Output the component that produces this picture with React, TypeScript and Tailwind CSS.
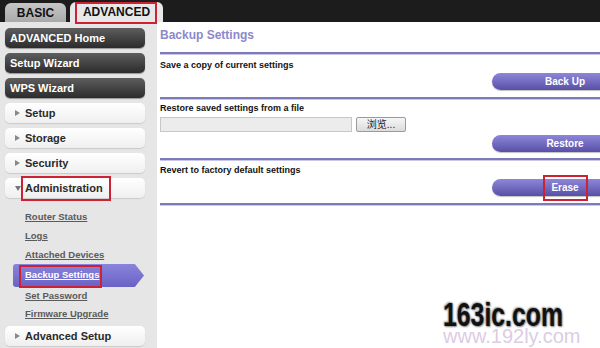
import React from "react";

// NETGEAR-style admin page: Advanced > Administration > Backup Settings

const darkItems = ["ADVANCED Home", "Setup Wizard", "WPS Wizard"];
const subLinks = ["Router Status", "Logs", "Attached Devices"];

function DarkItem({ label }: { label: string }) {
  return (
    <div className="h-[20px] rounded-[5px] bg-linear-to-b from-[#5e5e5e] to-[#2c2c2c] pl-[5px] text-[11px] font-bold leading-[20px] text-white shadow-[0_1px_1px_rgba(0,0,0,0.35)]">
      {label}
    </div>
  );
}

function Arrow({ open = false }: { open?: boolean }) {
  return open ? (
    <svg width="6" height="5" viewBox="0 0 6 5" className="mr-[4px]">
      <path d="M0 0h6L3 5z" fill="#777" />
    </svg>
  ) : (
    <svg width="5" height="6" viewBox="0 0 5 6" className="mr-[5px]">
      <path d="M0 0l5 3-5 3z" fill="#888" />
    </svg>
  );
}

function MenuItem({ label, open, marked }: { label: string; open?: boolean; marked?: boolean }) {
  return (
    <div className="flex h-[20px] items-center rounded-[5px] bg-linear-to-b from-white to-[#efefef] pl-[10px] text-[11px] font-bold text-[#2a2a2a] shadow-[0_1px_1px_rgba(0,0,0,0.12)]">
      <Arrow open={open} />
      <span className="relative">
        {label}
        {marked && (
          <span className="absolute left-[-4px] right-[-8px] top-[-4px] bottom-[-5px] border-2 border-[#cc2233]" />
        )}
      </span>
    </div>
  );
}

function SubLink({ label, h = "h-[19px] leading-[19px]" }: { label: string; h?: string }) {
  return (
    <div className={`${h} pl-[20px] text-[9.5px] font-bold text-[#5a5a5a] underline`}>
      {label}
    </div>
  );
}

function Rule() {
  return <div className="h-[2px] bg-[#7d7ab9] shadow-[0_1px_0_#c9c7e4]" />;
}

function PurpleButton({ label, marked }: { label: string; marked?: boolean }) {
  return (
    <div className="mr-[-38px] flex h-[17px] w-[146px] items-center justify-center self-end rounded-l-[9px] bg-linear-to-b from-[#8e87d9] to-[#5850a6] text-[10px] font-bold text-white shadow-[0_1px_1px_rgba(0,0,0,0.25)]">
      <span className="relative">
        {label}
        {marked && (
          <span className="absolute left-[-8px] right-[-9px] top-[-5px] bottom-[-6px] border-2 border-[#cc2233]" />
        )}
      </span>
    </div>
  );
}

export default function App() {
  return (
    <div className="relative h-[348px] w-[600px] overflow-hidden bg-white font-['Liberation_Sans','Noto_Sans_CJK_SC',Arial,sans-serif]">
      {/* top tab bar */}
      <div className="flex h-[22px] items-end bg-[#1c1c1c] pl-[5px]">
        <div className="flex h-[19px] w-[61px] items-center justify-center rounded-t-[6px] bg-linear-to-b from-[#c6c6c6] to-[#a9a9a9] text-[12px] font-bold text-[#111]">
          BASIC
        </div>
        <div className="relative ml-[4px] flex h-[20px] w-[93px] items-center justify-center rounded-t-[6px] bg-[#e8e8e8] text-[12px] font-bold text-[#111]">
          ADVANCED
          <span className="absolute left-[5px] top-0 h-[22px] w-[82px] border-2 border-[#cc2233]" />
        </div>
      </div>

      <div className="flex h-[326px]">
        {/* sidebar */}
        <div className="flex w-[157px] shrink-0 flex-col bg-[#e6e6e6] px-[5px] pt-[6px] pr-[12px]">
          <div className="flex flex-col gap-[5px]">
            {darkItems.map((d) => (
              <DarkItem key={d} label={d} />
            ))}
            <MenuItem label="Setup" />
            <MenuItem label="Storage" />
            <MenuItem label="Security" />
            <MenuItem label="Administration" open marked />
          </div>
          <div className="mt-[9px] flex flex-col">
            {subLinks.map((s) => (
              <SubLink key={s} label={s} />
            ))}
            <div className="relative ml-[8px] mr-[1px] flex h-[23px] items-center rounded-l-[3px] bg-linear-to-b from-[#8b84dc] to-[#6a62c4] pl-[12px] text-[9.5px] font-bold text-white [clip-path:polygon(0_0,93%_0,100%_50%,93%_100%,0_100%)]">
              <span className="underline">Backup Settings</span>
            </div>
            <SubLink label="Set Password" h="h-[18px] leading-[18px]" />
            <SubLink label="Firmware Upgrade" h="h-[18px] leading-[18px]" />
          </div>
          <div className="mt-[3px]">
            <MenuItem label="Advanced Setup" />
          </div>
        </div>

        {/* content */}
        <div className="flex flex-1 flex-col pl-[3px]">
          <div className="mt-[6px] h-[14px] text-[12px] font-bold leading-[14px] text-[#8c88cc]">Backup Settings</div>
          <div className="mt-[10px]">
            <Rule />
          </div>

          <div className="mt-[6px] h-[11px] text-[9px] font-bold leading-[11px] text-[#111]">Save a copy of current settings</div>
          <div className="mt-[2px] flex flex-col">
            <PurpleButton label="Back Up" />
          </div>
          <div className="mt-[7px]">
            <Rule />
          </div>

          <div className="mt-[4px] h-[11px] text-[9px] font-bold leading-[11px] text-[#111]">Restore saved settings from a file</div>
          <div className="mt-[3px] flex h-[15px] items-center">
            <div className="h-[15px] w-[192px] border border-[#c8c8c8] bg-[#ececec]" />
            <div className="ml-[4px] flex h-[15px] w-[50px] items-center justify-center rounded-[2px] border border-[#9a9a9a] bg-linear-to-b from-[#f6f6f6] to-[#dcdcdc] text-[10px] text-[#222]">
              浏览...
            </div>
          </div>
          <div className="mt-[3px] flex flex-col">
            <PurpleButton label="Restore" />
          </div>
          <div className="mt-[6px]">
            <Rule />
          </div>

          <div className="mt-[5px] h-[11px] text-[9px] font-bold leading-[11px] text-[#111]">Revert to factory default settings</div>
          <div className="mt-[3px] flex flex-col">
            <PurpleButton label="Erase" marked />
          </div>
          <div className="mt-[7px]">
            <Rule />
          </div>
        </div>
      </div>

      {/* Backup Settings annotation box */}
      <span className="absolute left-[19px] top-[265px] h-[23px] w-[83px] border-2 border-[#cc2233]" />

      {/* watermark */}
      <div className="absolute left-[443px] top-[326px] text-[20px] leading-none text-[#dccce4]">www.192ly.com</div>
      <div className="absolute left-[443px] top-[297px] origin-left scale-x-[0.73] text-[34px] font-bold leading-none text-[#111] [text-shadow:0_0_2px_#999,1px_1px_2px_#888,-1px_-1px_2px_#aaa]">
        163ic.com
      </div>
    </div>
  );
}
